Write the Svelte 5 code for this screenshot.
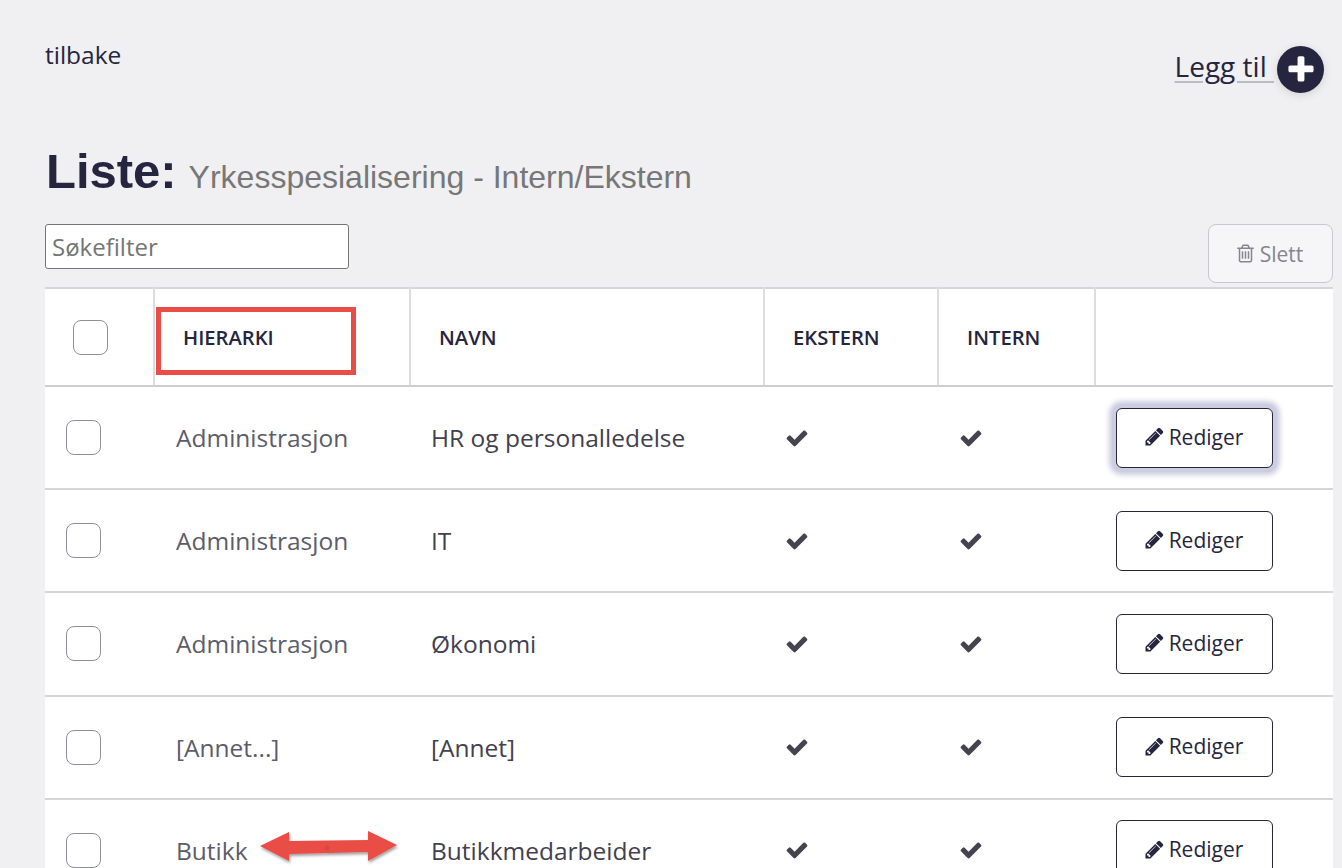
<script>
  const rows = [
    { h: 'Administrasjon', n: 'HR og personalledelse', focus: true },
    { h: 'Administrasjon', n: 'IT' },
    { h: 'Administrasjon', n: 'Økonomi' },
    { h: '[Annet...]', n: '[Annet]' },
    { h: 'Butikk', n: 'Butikkmedarbeider' }
  ];
  const check = 'M1671 566q0 40-28 68l-724 724-136 136q-28 28-68 28t-68-28l-136-136-362-362q-28-28-28-68t28-68l136-136q28-28 68-28t68 28l294 295 656-657q28-28 68-28t68 28l136 136q28 28 28 68z';
  const pencil = 'M491 1536l91-91-235-235-91 91v107h128v128h107zm523-928q0-22-22-22-10 0-17 7l-542 542q-7 7-7 17 0 22 22 22 10 0 17-7l542-542q7-7 7-17zm-54-192l416 416-832 832h-416v-416zm683 96q0 53-37 90l-166 166-416-416 166-165q36-38 90-38 53 0 91 38l235 234q37 39 37 91z';
  const trash = 'M704 736v576q0 14-9 23t-23 9h-64q-14 0-23-9t-9-23v-576q0-14 9-23t23-9h64q14 0 23 9t9 23zm256 0v576q0 14-9 23t-23 9h-64q-14 0-23-9t-9-23v-576q0-14 9-23t23-9h64q14 0 23 9t9 23zm256 0v576q0 14-9 23t-23 9h-64q-14 0-23-9t-9-23v-576q0-14 9-23t23-9h64q14 0 23 9t9 23zm128 724v-948h-896v948q0 22 7 40.5t14.5 27 10.5 8.5h832q3 0 10.5-8.5t14.5-27 7-40.5zm-672-1076h448l-48-117q-7-9-17-11h-317q-10 2-17 11zm928 32v64q0 14-9 23t-23 9h-96v948q0 83-47 143.5t-113 60.5h-832q-66 0-113-58.5t-47-141.5v-952h-96q-14 0-23-9t-9-23v-64q0-14 9-23t23-9h309l70-167q15-37 54-63t79-26h320q40 0 79 26t54 63l70 167h309q14 0 23 9t9 23z';
  const plus = 'M1600 736v192q0 40-28 68t-68 28h-416v416q0 40-28 68t-68 28h-192q-40 0-68-28t-28-68v-416h-416q-40 0-68-28t-28-68v-192q0-40 28-68t68-28h416v-416q0-40 28-68t68-28h192q40 0 68 28t28 68v416h416q40 0 68 28t28 68z';
</script>

<div class="page">
  <header class="top">
    <a class="back" href="#back">tilbake</a>
    <div class="add">
      <a class="add-label" href="#add">Legg til&nbsp;</a>
      <span class="add-btn"><svg viewBox="0 0 1792 1792" width="32" height="32"><path d={plus} fill="#fff" /></svg></span>
    </div>
  </header>

  <h1 class="title"><strong>Liste:</strong> <span>Yrkesspesialisering - Intern/Ekstern</span></h1>

  <div class="tools">
    <input class="search" type="text" placeholder="Søkefilter" />
    <button class="delete"><svg viewBox="0 0 1792 1792" width="21" height="21"><path d={trash} fill="currentColor" /></svg> Slett</button>
  </div>

  <div class="table-wrap">
    <table>
      <colgroup>
        <col class="c1" /><col class="c2" /><col class="c3" /><col class="c4" /><col class="c5" /><col />
      </colgroup>
      <thead>
        <tr>
          <th class="box-h"><span class="cb"></span></th>
          <th>HIERARKI</th>
          <th>NAVN</th>
          <th>EKSTERN</th>
          <th>INTERN</th>
          <th></th>
        </tr>
      </thead>
      <tbody>
        {#each rows as r}
          <tr>
            <td class="box-d"><span class="cb"></span></td>
            <td class="hier">{r.h}</td>
            <td class="name">{r.n}</td>
            <td class="mark"><svg viewBox="0 0 1792 1792" width="24" height="24"><path d={check} fill="#45434f" /></svg></td>
            <td class="mark"><svg viewBox="0 0 1792 1792" width="24" height="24"><path d={check} fill="#45434f" /></svg></td>
            <td class="act">
              <button class="edit" class:focus={r.focus}><svg viewBox="0 0 1792 1792" width="21" height="21"><path d={pencil} fill="#25253f" /></svg> Rediger</button>
            </td>
          </tr>
        {/each}
      </tbody>
    </table>
  </div>

  <div class="red-box"></div>
  <svg class="arrow" width="150" height="50" viewBox="0 0 150 50">
    <defs>
      <filter id="sh" x="-10%" y="-30%" width="120%" height="170%">
        <feDropShadow dx="1" dy="2" stdDeviation="1.6" flood-color="#000" flood-opacity="0.4" />
      </filter>
    </defs>
    <path filter="url(#sh)" fill="#ea4d45" d="M4 20 L33 6 L33 15 L112 14 L112 5 L141 19 L112 35 L112 26 L33 28 L33 35 Z" />
    <circle cx="71" cy="22" r="2.5" fill="#b9403c" opacity="0.4" />
  </svg>
</div>

<style>
  :global(body) {
    margin: 0;
    background: #f0f0f2;
    overflow: hidden;
  }
  .page {
    position: relative;
    height: 868px;
    overflow: hidden;
    padding-left: 45px;
    width: 1342px;
    box-sizing: border-box;
    font-family: "Open Sans", sans-serif;
    color: #25253f;
  }
  .top {
    display: flex;
    justify-content: space-between;
    align-items: flex-start;
    height: 139px;
    padding-top: 40px;
    box-sizing: border-box;
    width: 1279px;
  }
  .back {
    font-size: 24.5px;
    line-height: 30px;
    color: #25253f;
    text-decoration: none;
  }
  .add {
    display: flex;
    align-items: center;
    margin-top: 6px;
  }
  .add-label {
    font-size: 28px;
    line-height: 36px;
    margin-top: -8px;
    color: #25253f;
    text-decoration: underline;
    text-decoration-color: #bbbbc4;
    text-decoration-thickness: 2px;
    text-underline-offset: 4px;
  }
  .add-btn {
    width: 47px;
    height: 47px;
    margin-left: 3px;
    border-radius: 50%;
    background: #25253f;
    display: flex;
    align-items: center;
    justify-content: center;
    box-shadow: 0 2px 10px rgba(0, 0, 0, 0.12);
  }
  .title {
    margin: 0;
    height: 85px;
    font-family: "Liberation Sans", sans-serif;
    font-weight: 400;
    line-height: 64px;
    color: #25253f;
  }
  .title strong {
    font-size: 49px;
    font-weight: 700;
    margin-left: 1px;
  }
  .title span {
    font-size: 32px;
    color: #777;
    margin-left: 3px;
  }
  .tools {
    display: flex;
    justify-content: space-between;
    align-items: flex-start;
    height: 64px;
    width: 1288px;
  }
  .search {
    width: 304px;
    height: 45px;
    box-sizing: border-box;
    padding: 0 6px;
    border: 1px solid #757575;
    border-radius: 3px;
    background: #fff;
    font: 24px "Open Sans", sans-serif;
    color: #25253f;
    outline: none;
  }
  .search::placeholder {
    color: #757575;
    opacity: 1;
  }
  .delete {
    width: 125px;
    height: 59px;
    border: 1px solid #c8c8ce;
    border-radius: 8px;
    background: #f6f6f8;
    color: #85858f;
    font: 21px "Open Sans", sans-serif;
    display: flex;
    align-items: center;
    justify-content: center;
    gap: 4px;
    padding: 0 3px 0 0;
  }
  .table-wrap {
    background: #fff;
    width: 1288px;
    margin-top: -1px;
  }
  table {
    width: 100%;
    table-layout: fixed;
    border-collapse: collapse;
    border-top: 2px solid #d5d5da;
  }
  .c1 { width: 109px; }
  .c2 { width: 256px; }
  .c3 { width: 354px; }
  .c4 { width: 174px; }
  .c5 { width: 157px; }
  th {
    height: 98px;
    padding: 0 0 0 28px;
    box-sizing: border-box;
    text-align: left;
    font-size: 20.2px;
    font-weight: 600;
    color: #25253f;
    border-left: 2px solid #dcdce1;
    border-bottom: 2px solid #cfcfd3;
  }
  th:first-child {
    border-left: 0;
  }
  td {
    height: 103.2px;
    padding: 0;
    box-sizing: border-box;
    border-bottom: 2px solid #d5d5da;
    font-size: 24.5px;
  }
  .cb {
    display: block;
    width: 33px;
    height: 33px;
    border: 1px solid #8f8f98;
    border-radius: 8px;
    background: #fff;
  }
  th.box-h { padding-left: 28px; }
  .box-d { padding-left: 21px; }
  .hier {
    padding-left: 22px;
    color: #5c5c6a;
  }
  .name {
    padding-left: 21px;
    color: #43404f;
  }
  .mark {
    padding-left: 21px;
    line-height: 0;
  }
  .act { padding-left: 21px; }
  .edit {
    display: flex;
    align-items: center;
    justify-content: center;
    gap: 4px;
    width: 157px;
    height: 60px;
    padding: 0 2px 2px 0;
    border: 1px solid #25253f;
    border-radius: 6px;
    background: #fff;
    color: #25253f;
    font: 21px "Open Sans", sans-serif;
  }
  .edit.focus {
    box-shadow: 0 0 0 4px #cdcde2, 0 0 5px 7px rgba(170, 170, 205, 0.6);
  }
  .red-box {
    position: absolute;
    left: 156px;
    top: 307px;
    width: 200px;
    height: 68px;
    box-sizing: border-box;
    border: 5px solid #ea4d45;
  }
  .arrow {
    position: absolute;
    left: 256px;
    top: 826px;
  }
</style>
